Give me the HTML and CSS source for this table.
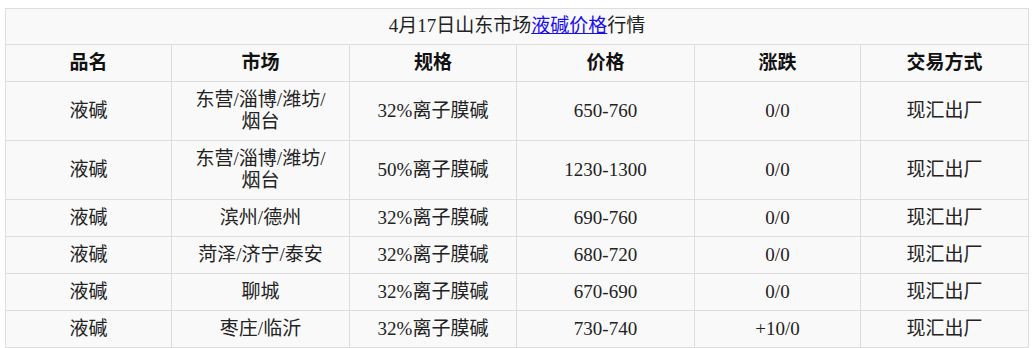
FILE: index.html
```html
<!DOCTYPE html>
<html lang="zh-CN">
<head>
<meta charset="utf-8">
<title>液碱价格行情</title>
<link rel="stylesheet" href="styles.css">
</head>
<body>
<table class="price-table">
  <colgroup>
    <col class="c1"><col class="c2"><col class="c3"><col class="c4"><col class="c5"><col class="c6">
  </colgroup>
  <tr class="title-row">
    <td colspan="6">4月17日山东市场<a href="#" class="link">液碱价格</a>行情</td>
  </tr>
  <tr class="head-row">
    <th>品名</th><th>市场</th><th>规格</th><th>价格</th><th>涨跌</th><th>交易方式</th>
  </tr>
  <tr>
    <td>液碱</td><td>东营/淄博/潍坊/<br>烟台</td><td>32%离子膜碱</td><td>650-760</td><td>0/0</td><td>现汇出厂</td>
  </tr>
  <tr>
    <td>液碱</td><td>东营/淄博/潍坊/<br>烟台</td><td>50%离子膜碱</td><td>1230-1300</td><td>0/0</td><td>现汇出厂</td>
  </tr>
  <tr>
    <td>液碱</td><td>滨州/德州</td><td>32%离子膜碱</td><td>690-760</td><td>0/0</td><td>现汇出厂</td>
  </tr>
  <tr>
    <td>液碱</td><td>菏泽/济宁/泰安</td><td>32%离子膜碱</td><td>680-720</td><td>0/0</td><td>现汇出厂</td>
  </tr>
  <tr>
    <td>液碱</td><td>聊城</td><td>32%离子膜碱</td><td>670-690</td><td>0/0</td><td>现汇出厂</td>
  </tr>
  <tr>
    <td>液碱</td><td>枣庄/临沂</td><td>32%离子膜碱</td><td>730-740</td><td>+10/0</td><td>现汇出厂</td>
  </tr>
</table>
</body>
</html>
```

FILE: styles.css
```css
html, body {
  margin: 0;
  padding: 0;
  background: #ffffff;
}

body {
  padding: 8px 0 0 5px;
  font-family: "Liberation Serif", "Noto Sans CJK SC", serif;
  font-size: 19px;
  color: #222222;
}

.price-table {
  border-collapse: collapse;
  table-layout: fixed;
  width: 1023px;
  background: #f9f9f9;
}

.c1 { width: 166px; }
.c2 { width: 178px; }
.c3 { width: 167px; }
.c4 { width: 178px; }
.c5 { width: 166px; }
.c6 { width: 168px; }

.price-table td,
.price-table th {
  border: 1px solid #dddddd;
  text-align: center;
  vertical-align: middle;
  padding: 7px 4px;
  line-height: 22px;
}

.title-row td {
  padding: 6px 4px 7px;
}

.head-row th {
  font-weight: bold;
  color: #111111;
  padding: 7px 4px;
}

.link {
  color: #1a0dee;
  text-decoration: underline;
}
```
